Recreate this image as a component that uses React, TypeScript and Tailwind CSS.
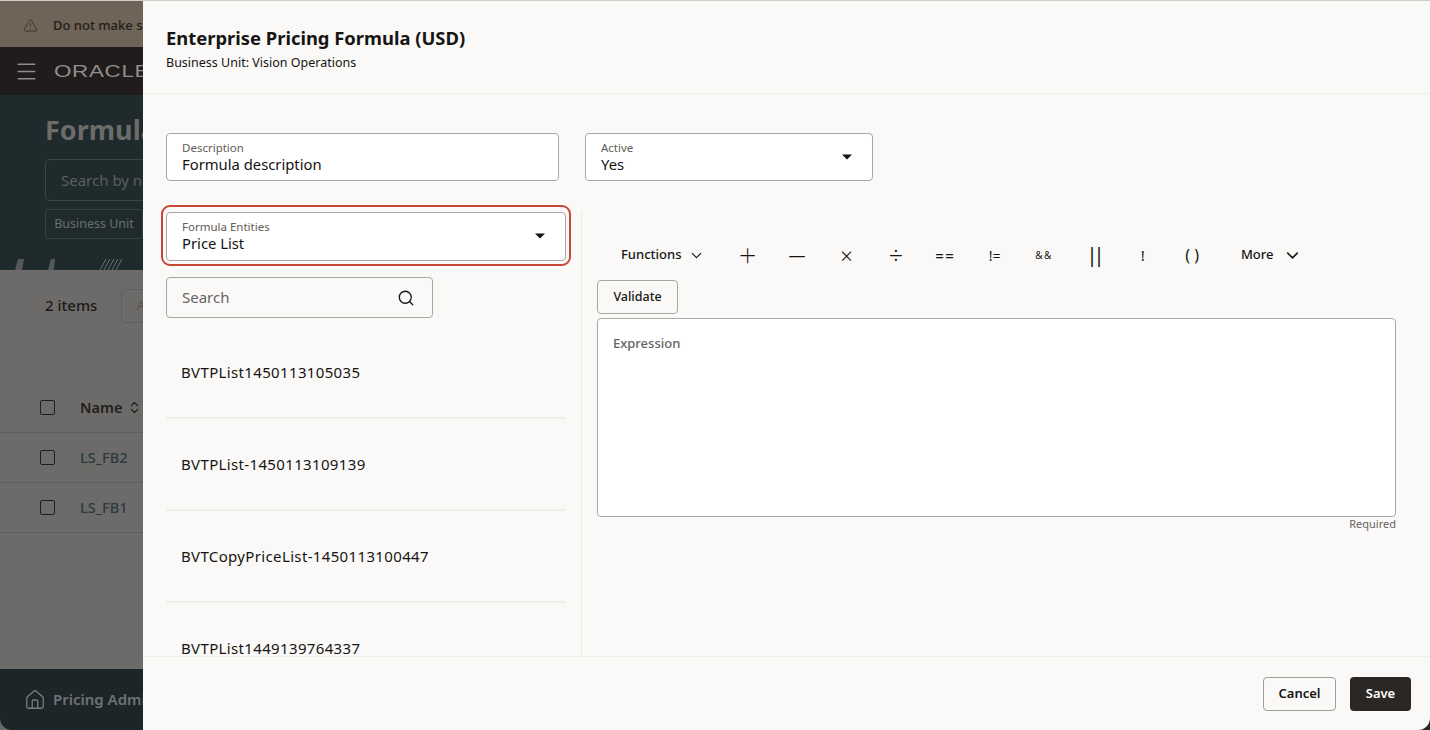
import React from "react";
import { ChevronDown, ChevronsUpDown, Search, Menu, TriangleAlert, Home } from "lucide-react";

const ops = [
  { t: "+", c: "text-[31px] font-extralight" },
  { t: "—", c: "text-[17px] font-normal" },
  { t: "×", c: "text-[22px] font-light" },
  { t: "÷", c: "text-[25px] font-light" },
  { t: "==", c: "text-[15px] tracking-[1.5px] font-medium" },
  { t: "!=", c: "text-[14px]" },
  { t: "&&", c: "text-[10px] tracking-[1.5px]" },
  { t: "||", c: "text-[20px] tracking-[-4px]" },
  { t: "!", c: "text-[15px]" },
  { t: "( )", c: "text-[16px]" },
];

const items = ["BVTPList1450113105035", "BVTPList-1450113109139", "BVTCopyPriceList-1450113100447", "BVTPList1449139764337"];

function Caret() {
  return (
    <svg width="10" height="6" viewBox="0 0 10 6" className="shrink-0">
      <path d="M0 0.5h10L5 5.5z" fill="#161513" />
    </svg>
  );
}

function Field({ label, value, caret, className }: { label: string; value: string; caret?: boolean; className: string }) {
  return (
    <div className={`flex items-center justify-between rounded-[4px] border border-[#a9a7a4] bg-white pl-[15px] pr-[20px] ${className}`}>
      <div className="flex flex-col">
        <span className="text-[11.5px] leading-[14px] text-[#5f5c58]">{label}</span>
        <span className="text-[14.8px] leading-[18px] text-[#161513]">{value}</span>
      </div>
      {caret && <Caret />}
    </div>
  );
}

function Row({ name, head }: { name: string; head?: boolean }) {
  return (
    <div className="flex h-[50px] shrink-0 items-center border-b border-[#5f5e5c] pl-[40px]">
      <div className="h-[15px] w-[15px] shrink-0 rounded-[2px] border border-[#1f1e1c]" />
      <span className={`ml-[25px] whitespace-nowrap text-[14.5px] ${head ? "font-semibold text-[#1f1e1c]" : "font-medium text-[#2b3a3c]"}`}>{name}</span>
      {head && <ChevronsUpDown size={15} className="ml-[5px] shrink-0 text-[#1f1e1c]" />}
    </div>
  );
}

function Backdrop() {
  return (
    <div className="flex w-[143px] shrink-0 flex-col overflow-hidden bg-[#6c6b69]">
      <div className="flex h-[46px] shrink-0 items-center whitespace-nowrap bg-[#6f6457] pl-[23px] pt-[3px]">
        <TriangleAlert size={15} strokeWidth={1.2} className="shrink-0 text-[#2d2a26]" />
        <span className="ml-[15px] text-[13px] font-medium text-[#1f1d1a]">Do not make se</span>
      </div>
      <div className="flex h-[48px] shrink-0 items-center whitespace-nowrap bg-[#1f1c1b] pl-[14px] pt-[1px]">
        <Menu size={25} strokeWidth={1.3} className="shrink-0 text-[#8f8e8c]" />
        <span className="ml-[15px] origin-left font-['Liberation_Sans',sans-serif] text-[17px] tracking-[0.5px] text-[#8f8e8c] [transform:scaleX(1.32)]">ORACLE</span>
      </div>
      <div className="flex h-[164px] shrink-0 flex-col bg-[#1f2a2c] pl-[45px] pt-[18px]">
        <div className="whitespace-nowrap text-[27px] font-bold leading-[34px] text-[#6c6c6b]">Formula</div>
        <div className="mt-[12px] flex h-[42px] w-[120px] shrink-0 items-center whitespace-nowrap rounded-l-[4px] border border-[#3c4648] pl-[15px] text-[15px] text-[#5b6061]">Search by name</div>
        <div className="mt-[8px] flex h-[30px] w-[98px] shrink-0 items-center justify-center whitespace-nowrap rounded-[4px] border border-[#364042] text-[12.5px] text-[#6a6e6f]">Business Unit</div>
      </div>
      <svg viewBox="0 0 143 11" className="block h-[11px] w-[143px] shrink-0 bg-[#1f2a2c]">
        <path d="M15 11l3-11h6l-2 11zM48 11l3-11h4l-1 11z" fill="#55595a" />
        <path d="M100 11l6-11M104 11l6-11M108 11l6-11M112 11l6-11M116 11l6-11" stroke="#6a6e6f" strokeWidth="1" />
      </svg>
      <div className="flex min-h-0 flex-1 flex-col">
        <div className="flex h-[71px] shrink-0 items-center pl-[45px]">
          <span className="whitespace-nowrap text-[15px] font-medium text-[#1c1b19]">2 items</span>
          <div className="ml-[24px] flex h-[34px] w-[30px] items-center rounded-l-[4px] border border-[#5f5e5c] pl-[14px] text-[13px] text-[#55544f]">A</div>
        </div>
        <div className="h-[42px] shrink-0" />
        <Row name="Name" head />
        <Row name="LS_FB2" />
        <Row name="LS_FB1" />
      </div>
      <div className="flex h-[61px] shrink-0 items-center whitespace-nowrap rounded-bl-[12px] bg-[#1c2628] pl-[24px]">
        <Home size={22} strokeWidth={1.4} className="shrink-0 text-[#7a7d7e]" />
        <span className="ml-[7px] text-[15px] font-semibold text-[#6f7273]">Pricing Admin</span>
      </div>
    </div>
  );
}

export default function App() {
  return (
    <div className="flex h-[730px] w-[1430px] overflow-hidden border-t border-[#cfcdca] bg-[#2a2826] font-['Noto_Sans','Open_Sans',sans-serif] text-[#161513]">
      <Backdrop />
      <div className="flex min-w-0 flex-1 flex-col rounded-br-[12px] bg-[#faf9f7]">
        <header className="flex h-[93px] shrink-0 flex-col border-b border-[#f0eeeb] pl-[23px] pt-[23px]">
          <h1 className="text-[18.4px] font-bold leading-[28px] text-[#161513]">Enterprise Pricing Formula (USD)</h1>
          <p className="mt-[2px] text-[12.5px] leading-[17px] text-[#161513]">Business Unit: Vision Operations</p>
        </header>

        <main className="flex min-h-0 flex-1 flex-col overflow-hidden">
          <div className="flex shrink-0 gap-[26px] pl-[23px] pt-[39px]">
            <Field label="Description" value="Formula description" className="h-[48px] w-[393px]" />
            <Field label="Active" value="Yes" caret className="h-[48px] w-[288px]" />
          </div>
          <div className="flex min-h-0 flex-1 pt-[31px]">
            <div className="flex w-[439px] shrink-0 flex-col border-r border-[#ecebe8] pl-[23px] pr-[15px]">
              <div className="relative shrink-0">
                <div className="pointer-events-none absolute -inset-x-[5px] -bottom-[5px] -top-[7px] rounded-[9px] border-2 border-[#c74634]" />
                <Field label="Formula Entities" value="Price List" caret className="h-[49px] w-[400px] pb-[2px]" />
              </div>
              <div className="mt-[16px] flex h-[41px] w-[267px] shrink-0 items-center justify-between rounded-[4px] border border-[#a9a7a4] pl-[15px] pr-[17px]">
                <span className="text-[15px] text-[#66635f]">Search</span>
                <Search size={18} strokeWidth={1.7} className="text-[#161513]" />
              </div>
              <ul className="mt-[9px] min-h-0 flex-1 overflow-hidden">
                {items.map((s) => (
                  <li key={s} className="flex h-[92px] items-center border-b-2 border-[#efedea] pl-[15px] text-[15px] tracking-[0.35px] text-[#161513]">{s}</li>
                ))}
              </ul>
            </div>

            <div className="flex min-w-0 flex-1 flex-col pl-[15px] pr-[34px] pt-[17px]">
              <div className="flex h-[52px] shrink-0 items-center">
                <div className="flex w-[126px] shrink-0 items-center pl-[24px]">
                  <span className="text-[13px] font-medium">Functions</span>
                  <ChevronDown size={17} strokeWidth={1.6} className="ml-[7px]" />
                </div>
                {ops.map((o) => (
                  <div key={o.t} className={`flex h-[30px] w-[49.4px] shrink-0 items-center justify-center text-[#161513] ${o.c}`}>{o.t}</div>
                ))}
                <div className="ml-[24px] flex items-center">
                  <span className="text-[13px] font-medium">More</span>
                  <ChevronDown size={19} strokeWidth={2} className="ml-[10px]" />
                </div>
              </div>
              <button className="mt-[-1px] h-[34px] w-[81px] shrink-0 rounded-[4px] border border-[#a9a7a4] text-[12.5px] font-medium text-[#161513]">Validate</button>
              <div className="mt-[4px] h-[199px] w-[799px] shrink-0 rounded-[4px] border border-[#a9a7a4] bg-white pl-[15px] pt-[11px]">
                <span className="text-[13px] font-medium text-[#66635f]">Expression</span>
              </div>
              <div className="mt-[-1px] w-[799px] text-right text-[11px] leading-[15px] text-[#66635f]">Required</div>
            </div>
          </div>
        </main>

        <footer className="flex h-[74px] shrink-0 items-center justify-end gap-[14px] border-t border-[#f0eeeb] pr-[19px]">
          <button className="h-[34px] w-[73px] rounded-[4px] border border-[#a09e9b] text-[13px] font-semibold text-[#161513]">Cancel</button>
          <button className="h-[34px] w-[61px] rounded-[4px] bg-[#2b2725] text-[13px] font-semibold text-white">Save</button>
        </footer>
      </div>
    </div>
  );
}
